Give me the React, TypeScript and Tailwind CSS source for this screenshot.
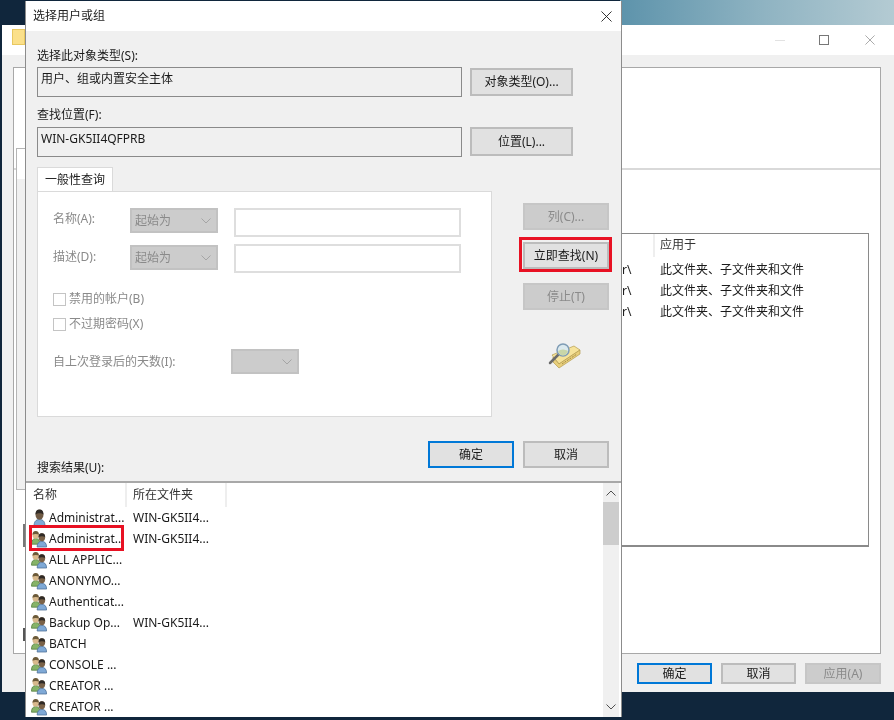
import type { ReactNode } from 'react';

const results: { name: string; folder?: string; single?: boolean }[] = [
  { name: 'Administrat...', folder: 'WIN-GK5II4...', single: true },
  { name: 'Administrat...', folder: 'WIN-GK5II4...' },
  { name: 'ALL APPLIC...' },
  { name: 'ANONYMO...' },
  { name: 'Authenticat...' },
  { name: 'Backup Op...', folder: 'WIN-GK5II4...' },
  { name: 'BATCH' },
  { name: 'CONSOLE ...' },
  { name: 'CREATOR ...' },
  { name: 'CREATOR ...' },
];

function CloseIcon({ className }: { className: string }) {
  return (
    <svg viewBox="0 0 12 12" className={className} fill="none" stroke="currentColor" strokeWidth="1">
      <path d="M0.5 0.5 11.5 11.5M11.5 0.5 0.5 11.5" />
    </svg>
  );
}

function Chevron({ className = 'text-[#a5a5a5]' }: { className?: string }) {
  return (
    <svg viewBox="0 0 10 6" className={`h-[6px] w-[10px] ${className}`} fill="none" stroke="currentColor" strokeWidth="1">
      <path d="M0.5 0.5 5 5 9.5 0.5" />
    </svg>
  );
}

function UserIcon() {
  return (
    <svg viewBox="0 0 17 18" className="h-[18px] w-[17px] shrink-0">
      <path d="M3 17.500c0-4.500 1.500-7 5.500-7s5.500 2.500 5.500 7z" fill="#7fa9d6" stroke="#4d6f96" strokeWidth="0.8" />
      <ellipse cx="8.500" cy="5.800" rx="4" ry="5" fill="#6f5a44" />
      <path d="M4.500 5.500C4.500 1.800 6.300.5 8.500.5s4 1.300 4 5C10.500 3.800 6.500 3.800 4.500 5.500z" fill="#2f2a26" />
    </svg>
  );
}

function GroupIcon() {
  return (
    <svg viewBox="0 0 18 18" className="h-[18px] w-[17px] shrink-0">
      <path d="M0.500 14.500c0-3.800 1.500-6 4.500-6s4.500 2.200 4.500 6z" fill="#86b368" stroke="#4f7a3a" strokeWidth="0.8" />
      <ellipse cx="5" cy="4.800" rx="3.400" ry="4" fill="#d8b98c" />
      <path d="M1.600 4.500C1.600 1.600 3.300.6 5 .6s3.400 1 3.400 3.900C6.800 3.300 3.300 3.300 1.600 4.500z" fill="#6b5a3a" />
      <path d="M6.500 17.500c0-3.800 1.800-6 5-6s5 2.200 5 6z" fill="#7fa9d6" stroke="#4d6f96" strokeWidth="0.8" />
      <ellipse cx="11.500" cy="7.200" rx="3.500" ry="4.200" fill="#7a6248" />
      <path d="M8 7c0-3.200 1.600-4 3.500-4s3.500.8 3.500 4C13.300 5.700 9.800 5.700 8 7z" fill="#2f2a26" />
    </svg>
  );
}

function SearchIcon() {
  return (
    <svg viewBox="0 0 34 26" className="h-[26px] w-[34px]">
      <path d="M5 12 27 3 33 7 12 21z" fill="#f6e39a" stroke="#b59c4e" strokeWidth="0.7" />
      <path d="M6 14 12 21 33 7 33 11 12 25 6 19z" fill="#e9cf7c" stroke="#b59c4e" strokeWidth="0.7" />
      <path d="M15 21 30 11" stroke="#a58d46" strokeWidth="1" strokeDasharray="2 1" />
      <path d="M12 11 3 20" stroke="#6b6b6b" strokeWidth="2.500" strokeLinecap="round" />
      <circle cx="16" cy="7" r="6" fill="#dbe9ee" stroke="#7f9cb5" strokeWidth="1.500" />
      <path d="M11 8c3-2 6-2 10 0-1 3-3 4.500-5 4.500S12 11 11 8z" fill="#c9d6a8" />
    </svg>
  );
}

function Btn({ children, className = '' }: { children: ReactNode; className?: string }) {
  return (
    <div className={`flex items-center justify-center border-2 border-[#bcbcbc] bg-[#e1e1e1] text-[#1a1a1a] ${className}`}>
      {children}
    </div>
  );
}

function DisabledBtn({ children, className = '' }: { children: ReactNode; className?: string }) {
  return (
    <div className={`flex items-center justify-center border-2 border-[#c6c6c6] bg-[#cccccc] text-[#8a8a8a] ${className}`}>
      {children}
    </div>
  );
}

function FieldSelect({ label, className }: { label?: string; className: string }) {
  return (
    <div className={`flex items-center justify-between border-2 border-[#c2c2c2] bg-[#cccccc] pl-[3px] pr-[5px] text-[#8a8a8a] ${className}`}>
      <span>{label}</span>
      <Chevron />
    </div>
  );
}

function QueryRow({ label, labelTop, selectTop, marginTop }: { label: string; labelTop: string; selectTop: string; marginTop: string }) {
  return (
    <div className={`flex items-start ${marginTop}`}>
      <div className={`w-[77px] text-[#8a8a8a] ${labelTop}`}>{label}</div>
      <FieldSelect label="起始为" className={`h-[25px] w-[88px] ${selectTop}`} />
      <div className="ml-[16px] h-[29px] w-[227px] border-2 border-[#dedede] bg-white" />
    </div>
  );
}

function CheckRow({ label, marginTop }: { label: string; marginTop: string }) {
  return (
    <div className={`flex items-center gap-[3px] text-[#8a8a8a] ${marginTop}`}>
      <div className="size-[13px] border border-[#c4c4c4] bg-white" />
      <span>{label}</span>
    </div>
  );
}

function BackWindow() {
  return (
    <div className="absolute left-[2px] top-[25px] flex h-[667px] w-[892px] flex-col bg-[#f0f0f0]">
      <div className="flex h-[30px] items-center bg-white pl-[10px]">
        <div className="mt-[-6px] h-[16px] w-[13px] border border-[#e8c860] bg-[#fbe08a]" />
        <div className="ml-auto flex items-center text-[#9a9a9a]">
          <div className="mr-[34px] h-px w-[10px] bg-[#e2e2e2]" />
          <div className="mr-[36px] size-[10px] border border-[#777777]" />
          <CloseIcon className="mr-[19px] size-[10px]" />
        </div>
      </div>
      <div className="mx-[11px] mr-[13px] mt-[12px] flex h-[587px] flex-col border border-[#a8a8a8] bg-white">
        <div className="h-[102px] border-b-2 border-[#d9d9d9]" />
        <div className="ml-auto mr-[11px] mt-[63px] h-[314px] w-[400px] border border-b-2 border-[#8a8a8a]">
          <div className="flex h-[25px] items-start">
            <div className="h-[23px] w-[185px] border-r-2 border-[#eeeeee]" />
            <span className="ml-[5px] mt-[3px] text-[#333333]">应用于</span>
          </div>
          {[0, 1, 2].map((row) => (
            <div key={row} className="flex h-[21px] items-center text-[#1a1a1a]">
              <span className="ml-[152px] w-[38px]">r\</span>
              此文件夹、子文件夹和文件
            </div>
          ))}
        </div>
      </div>
      <div className="mr-[13px] mt-[9px] flex justify-end gap-[9px]">
        <div className="flex h-[21px] w-[75px] items-center justify-center border-2 border-[#0078d7] bg-[#e1e1e1]">确定</div>
        <Btn className="h-[21px] w-[75px]">取消</Btn>
        <DisabledBtn className="h-[21px] w-[76px]">应用(A)</DisabledBtn>
      </div>
      {/* sliver of the page behind the dialog */}
      <div className="absolute left-[14px] top-[123px] h-[342px] w-[9px] border border-r-0 border-[#b5b5b5] bg-[linear-gradient(#ffffff_30px,#f0f0f0_30px)]" />
      <div className="absolute left-[21px] top-[499px] h-[23px] w-[2px] bg-[#777777]" />
      <div className="absolute left-[21px] top-[603px] h-[13px] w-[2px] bg-[#555555]" />
    </div>
  );
}

function Dialog() {
  return (
    <div className="absolute left-[25px] top-px flex h-[716px] w-[597px] flex-col border-x border-[#8c8c8c] bg-[#f0f0f0]">
      <div className="flex h-[30px] shrink-0 items-center justify-between bg-white pl-[7px] pr-[9px] text-[#222222]">
        <span>选择用户或组</span>
        <CloseIcon className="size-[11px] text-[#222222]" />
      </div>

      <div className="flex h-[450px] shrink-0 flex-col pl-[11px] pr-[12px]">
        <div className="mt-[16px] h-[17px] leading-[17px]">选择此对象类型(S):</div>
        <div className="mt-[3px] flex gap-[8px]">
          <div className="h-[30px] w-[425px] border border-[#8a8a8a] pl-[3px] pt-[3px]">用户、组或内置安全主体</div>
          <Btn className="mt-px h-[28px] w-[103px]">对象类型(O)...</Btn>
        </div>
        <div className="mt-[9px] h-[17px] leading-[17px]">查找位置(F):</div>
        <div className="mt-[4px] flex gap-[8px]">
          <div className="h-[30px] w-[425px] border border-[#8a8a8a] pl-[3px] pt-[3px]">WIN-GK5II4QFPRB</div>
          <Btn className="h-[29px] w-[103px]">位置(L)...</Btn>
        </div>

        <div className="mt-[10px] flex h-[25px] w-[76px] items-center border border-b-0 border-[#dadada] bg-white pl-[7px] text-[#222222]">一般性查询</div>
        <div className="flex">
          <div className="-mt-px h-[226px] w-[455px] border border-[#dadada] bg-white pl-[15px] pt-[16px]">
            <QueryRow label="名称(A):" labelTop="mt-[3px]" selectTop="" marginTop="" />
            <QueryRow label="描述(D):" labelTop="mt-[5px]" selectTop="mt-px" marginTop="mt-[7px]" />
            <CheckRow label="禁用的帐户(B)" marginTop="mt-[18px]" />
            <CheckRow label="不过期密码(X)" marginTop="mt-[9px]" />
            <div className="mt-[17px] flex items-center">
              <div className="w-[178px] text-[#8a8a8a]">自上次登录后的天数(I):</div>
              <FieldSelect className="h-[25px] w-[68px]" />
            </div>
          </div>
          <div className="ml-[31px] mt-[11px] flex w-[86px] flex-col">
            <DisabledBtn className="h-[27px]">列(C)...</DisabledBtn>
            {/* red annotation around the button */}
            <div className="-ml-[4px] -mr-[3px] mt-[7px] border-[3px] border-[#e81123] pl-px pt-[2px]">
              <Btn className="h-[27px]">立即查找(N)</Btn>
            </div>
            <DisabledBtn className="mt-[11px] h-[27px]">停止(T)</DisabledBtn>
            <div className="ml-[24px] mt-[33px]">
              <SearchIcon />
            </div>
          </div>
        </div>

        <div className="mt-[24px] flex justify-end gap-[9px]">
          <div className="flex h-[27px] w-[86px] items-center justify-center border-2 border-[#0078d7] bg-[#e1e1e1]">确定</div>
          <Btn className="h-[27px] w-[86px]">取消</Btn>
        </div>
        <div className="-mt-[9px] h-[17px] leading-[17px]">搜索结果(U):</div>
      </div>

      <div className="relative flex min-h-0 flex-1 border-t-2 border-[#a8a8a8] bg-white">
        <div className="min-w-0 flex-1">
          <div className="flex h-[24px] items-center text-[#333333]">
            <div className="flex h-full w-[101px] items-center border-r-2 border-[#eeeeee] pl-[7px]">名称</div>
            <div className="flex h-full w-[100px] items-center border-r-2 border-[#eeeeee] pl-[6px]">所在文件夹</div>
          </div>
          {results.map((row, i) => (
            <div key={i} className="flex h-[21px] items-center text-[#1a1a1a]">
              <div className="flex w-[107px] items-center pl-[5px]">
                {row.single ? <UserIcon /> : <GroupIcon />}
                <span className="ml-px whitespace-nowrap">{row.name}</span>
              </div>
              <span>{row.folder}</span>
            </div>
          ))}
        </div>
        <div className="mr-[2px] flex w-[16px] flex-col items-center bg-[#f0f0f0] pt-[7px]">
          <Chevron className="rotate-180 text-[#505050]" />
          <div className="mt-[6px] h-[43px] w-full bg-[#cdcdcd]" />
          <div className="mt-auto pb-[7px]">
            <Chevron className="text-[#505050]" />
          </div>
        </div>
        {/* red annotation around the second row */}
        <div className="absolute left-[3px] top-[42px] h-[26px] w-[95px] border-[3px] border-[#e81123]" />
      </div>
    </div>
  );
}

export default function App() {
  return (
    <div
      className="relative h-[720px] w-[894px] overflow-hidden bg-[#10263c] text-[12px] leading-[16px] text-[#1a1a1a] blur-[0.35px]"
      style={{ fontFamily: '"Noto Sans", "Noto Sans CJK SC", sans-serif' }}
    >
      <div className="absolute left-[620px] top-0 h-[25px] w-[274px] bg-[linear-gradient(to_right,#5d93ab,#8db2c1_50%,#b4cbd3)]" />
      <BackWindow />
      <Dialog />
    </div>
  );
}
